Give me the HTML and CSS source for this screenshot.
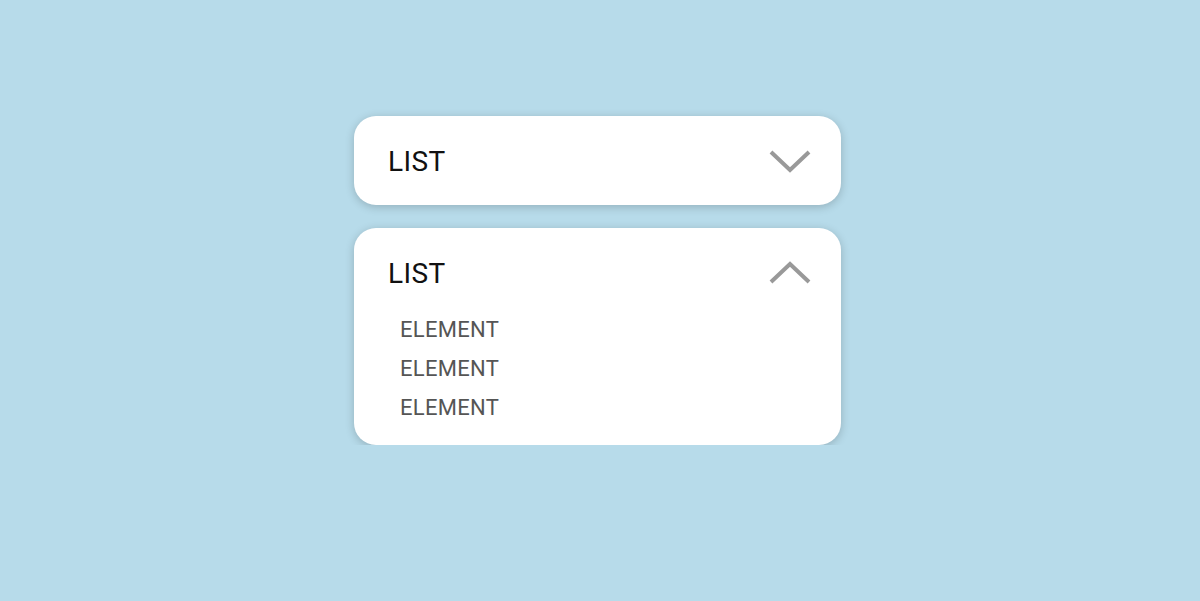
FILE: index.html
```html
<!DOCTYPE html>
<html>
<head>
<meta charset="utf-8">
<link rel="stylesheet" href="styles.css">
</head>
<body>
<div class="stack">
  <div class="card">
    <div class="head">
      <span class="title">LIST</span>
      <svg class="chev" width="42" height="24" viewBox="0 0 42 24"><polyline points="2,3 21,21 40,3" fill="none" stroke="#999" stroke-width="4"/></svg>
    </div>
  </div>
  <div class="card">
    <div class="head">
      <span class="title">LIST</span>
      <svg class="chev" width="42" height="24" viewBox="0 0 42 24"><polyline points="2,21 21,3 40,21" fill="none" stroke="#999" stroke-width="4"/></svg>
    </div>
    <ul class="items">
      <li>ELEMENT</li>
      <li>ELEMENT</li>
      <li>ELEMENT</li>
    </ul>
  </div>
</div>
</body>
</html>
```
FILE: styles.css
```css
html, body {
  margin: 0;
  padding: 0;
  background: #b7dbea;
  font-family: Roboto, "Liberation Sans", sans-serif;
}
.stack {
  display: flex;
  flex-direction: column;
  align-items: center;
  gap: 23px;
  padding-top: 116px;
  padding-right: 5px;
}
.card {
  width: 487px;
  background: #fff;
  border-radius: 22px;
  box-shadow: 0 2px 10px rgba(0, 0, 0, 0.2);
  box-sizing: border-box;
  padding: 0 30px 0 34px;
}
.head {
  height: 89px;
  padding-top: 2px;
  box-sizing: border-box;
  display: flex;
  align-items: center;
  justify-content: space-between;
}
.title {
  font-size: 28px;
  letter-spacing: 0.4px;
  color: #111;
}
.chev {
  display: block;
  margin-top: -2px;
}
.items {
  list-style: none;
  margin: -7px 0 0 0;
  padding: 0 0 18px 12px;
}
.items li {
  font-size: 22px;
  letter-spacing: 0.3px;
  line-height: 39px;
  color: #555;
}
```
